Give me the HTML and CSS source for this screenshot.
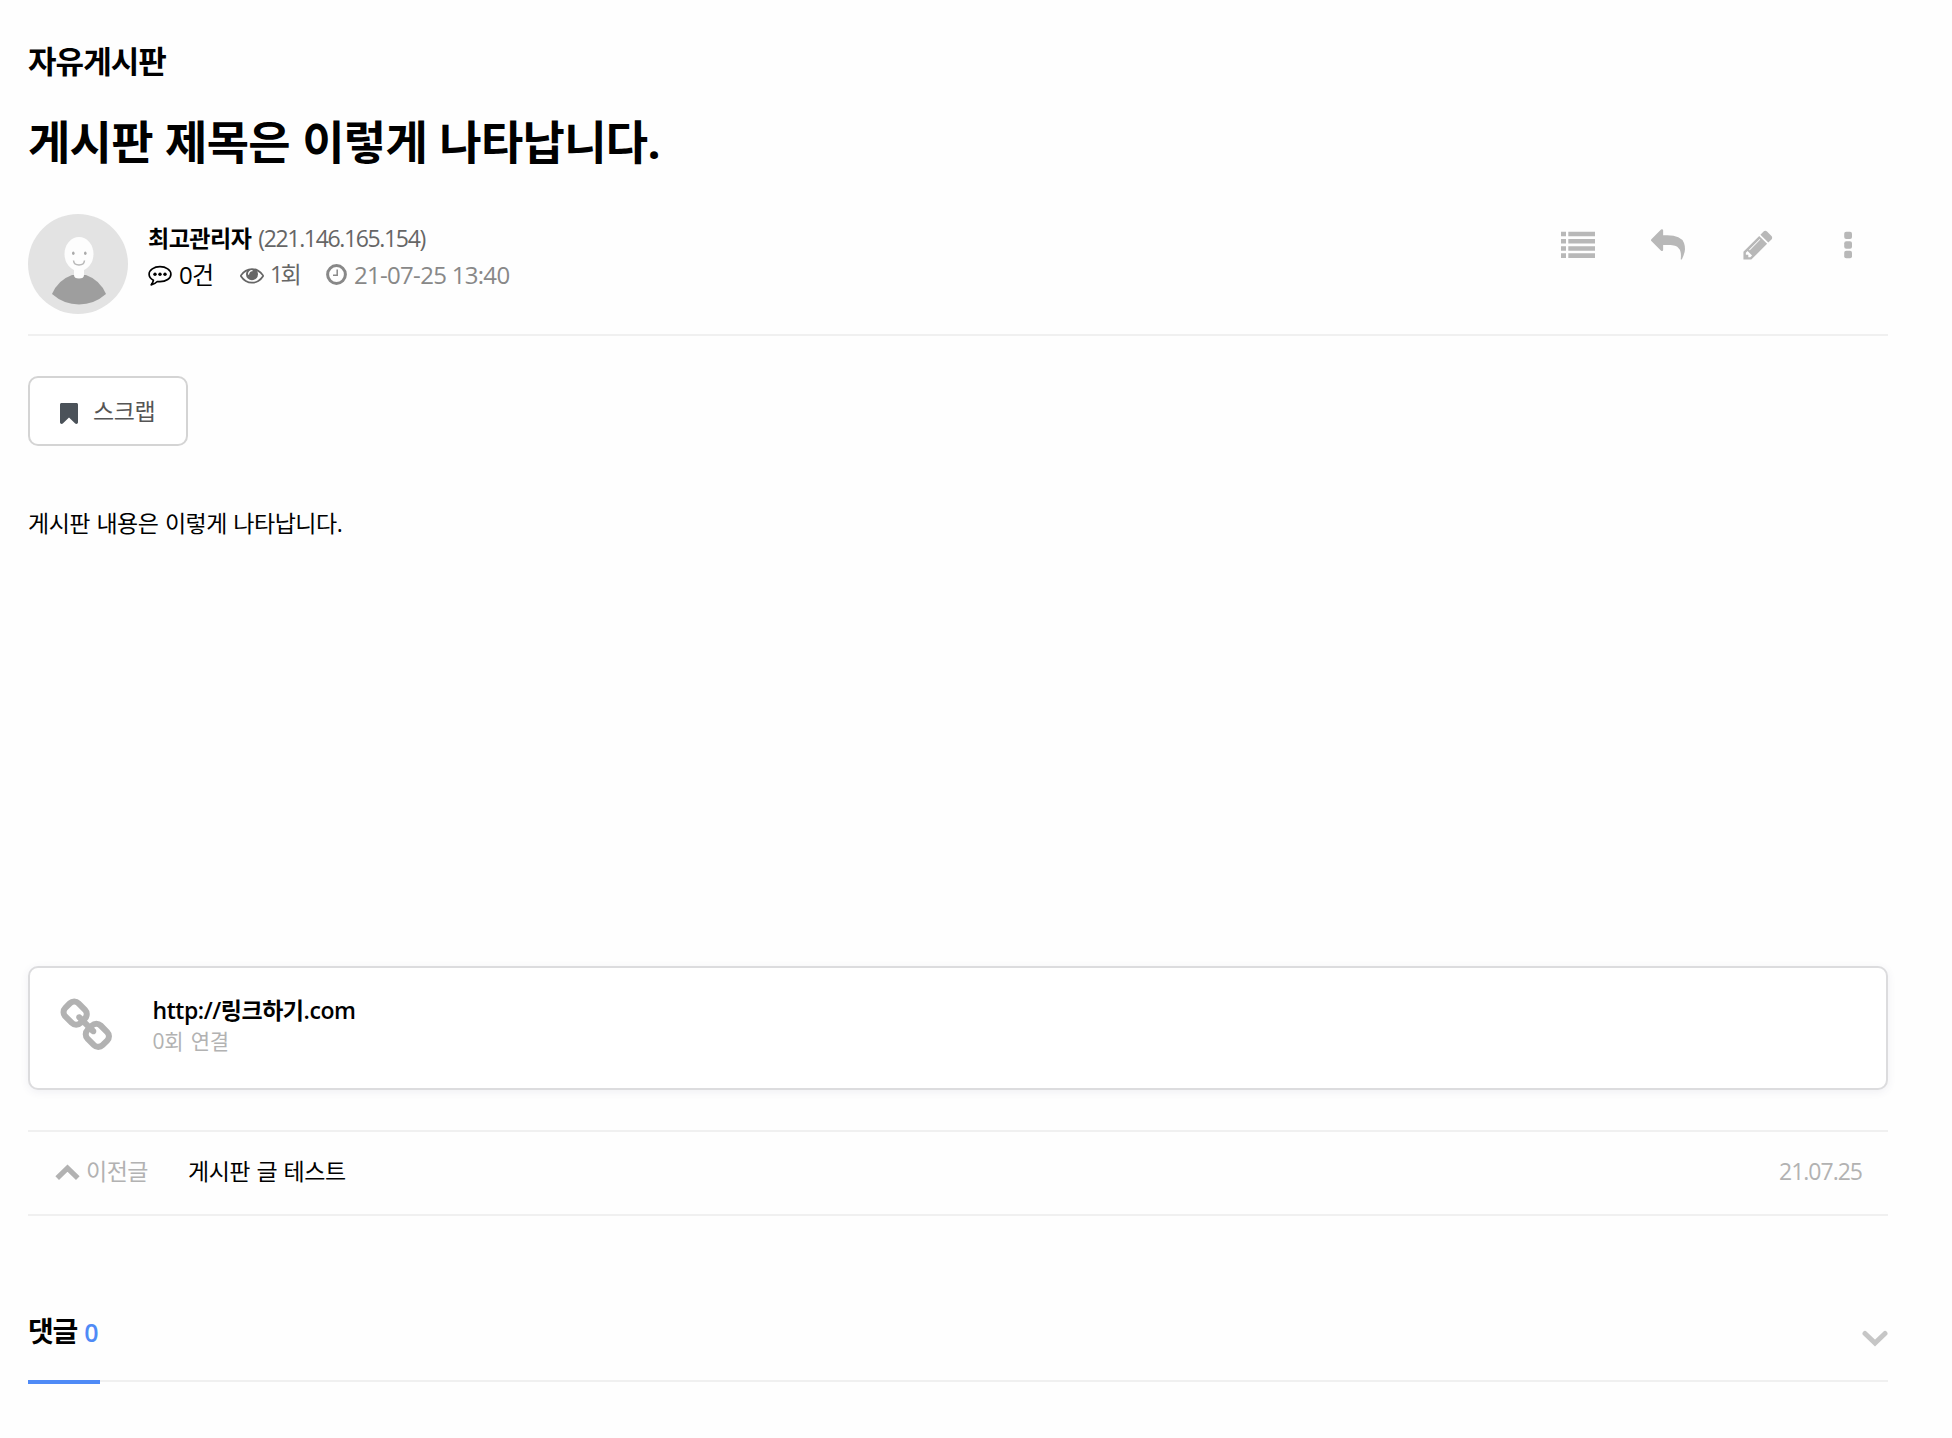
FILE: index.html
```html
<!DOCTYPE html>
<html lang="ko">
<head>
<meta charset="utf-8">
<title>자유게시판</title>
<link rel="stylesheet" href="styles.css">
</head>
<body>
<main class="board">
  <h2 class="board-name">자유게시판</h2>
  <h1 class="post-title">게시판 제목은 이렇게 나타납니다.</h1>

  <header class="post-info">
    <svg class="avatar" viewBox="0 0 100 100">
      <circle cx="50" cy="50" r="50" fill="#e3e3e3"/>
      <path d="M24 80Q30 66 44 61H58Q72 66 78 80Q66 90.500 51 90.500Q36 90.500 24 80Z" fill="#9e9e9e"/>
      <path d="M46 50H56V61Q56 64.500 51 64.500Q46 64.500 46 61Z" fill="#fdfdfd"/>
      <ellipse cx="51" cy="40" rx="14.500" ry="17" fill="#fdfdfd"/>
      <ellipse cx="45.300" cy="39.300" rx="1.300" ry="1.800" fill="#aaa"/>
      <ellipse cx="57.300" cy="39.300" rx="1.300" ry="1.800" fill="#aaa"/>
      <path d="M45.500 46.500Q46 51 51 51Q56 51 56.500 46.500" fill="none" stroke="#b8b8b8" stroke-width="1.500"/>
    </svg>
    <div class="profile">
      <p class="author"><strong>최고관리자</strong><span class="ip">(221.146.165.154)</span></p>
      <p class="meta">
        <span class="meta-item comments"><svg width="24" height="22" viewBox="0 0 24 22"><path d="M12 1.700C18 1.700 22.900 5 22.900 9.200S18 16.700 12 16.700Q10.500 16.700 9.300 16.500Q6.700 19.200 3.200 19.900Q5 18 5.400 15.200C2.600 13.700 1.100 11.600 1.100 9.200C1.100 5 6 1.700 12 1.700Z" fill="none" stroke="currentColor" stroke-width="1.700" stroke-linejoin="round"/><circle cx="7" cy="9.200" r="1.700"/><circle cx="12" cy="9.200" r="1.700"/><circle cx="17" cy="9.200" r="1.700"/></svg>0건</span>
        <span class="meta-item views"><svg width="24" height="24" viewBox="0 0 1792 1792"><path d="M1664 960q-152-236-381-353 61 104 61 225 0 185-131.500 316.500t-316.500 131.500-316.500-131.500-131.500-316.500q0-121 61-225-229 117-381 353 133 205 333.500 326.500t434.500 121.500 434.500-121.500 333.500-326.500zm-720-384q0-20-14-34t-34-14q-125 0-214.500 89.500t-89.500 214.500q0 20 14 34t34 14 34-14 14-34q0-86 61-147t147-61q20 0 34-14t14-34zm848 384q0 34-20 69-140 230-376.500 368.500t-499.500 138.500-499.500-139-376.500-368q-20-35-20-69t20-69q140-229 376.500-368t499.500-139 499.500 139 376.500 368q20 35 20 69z"/></svg>1회</span>
        <span class="meta-item date"><svg width="21" height="21" viewBox="0 0 21 21"><circle cx="10.500" cy="10.500" r="8.900" fill="none" stroke="currentColor" stroke-width="3"/><path d="M11.200 5.500V11.200H7" fill="none" stroke="currentColor" stroke-width="1.500"/></svg>21-07-25 13:40</span>
      </p>
    </div>
    <nav class="tools">
      <svg viewBox="0 0 34 34"><path d="M0 3.700h5v4.600H0zM0 11h5v4.600H0zM0 18.200h5v4.600H0zM0 25.300h5v4.700H0zM7.300 3.700H34v4.600H7.300zM7.300 11H34v4.600H7.300zM7.300 18.200H34v4.600H7.300zM7.300 25.300H34v4.700H7.300z"/></svg>
      <svg viewBox="0 0 1792 1792"><path d="M1792 1120q0 166-127 451-3 7-10.500 24t-13.500 30-13 22q-12 17-28 17-15 0-23.500-10t-8.500-25q0-9 2.500-26.500t2.500-23.500q5-68 5-123 0-101-17.500-181t-48.500-138.500-80-101-105.500-69.500-133-42.500-154-21.500-175.500-6h-224v256q0 26-19 45t-45 19-45-19l-512-512q-19-19-19-45t19-45l512-512q19-19 45-19t45 19 19 45v256h224q713 0 875 403 53 134 53 333z"/></svg>
      <svg viewBox="0 0 1792 1792"><path d="M491 1536l91-91-235-235-91 91v107h128v128h107zm523-928q0-22-22-22-10 0-17 7l-542 542q-7 7-7 17 0 22 22 22 10 0 17-7l542-542q7-7 7-17zm-54-192l416 416-832 832h-416v-416zm683 96q0 53-37 90l-166 166-416-416 166-165q36-38 90-38 53 0 91 38l235 234q37 39 37 91z"/></svg>
      <svg viewBox="0 0 34 34"><rect x="13.200" y="3.700" width="7.800" height="7.400" rx="2"/><rect x="13.200" y="13.300" width="7.800" height="7.400" rx="2"/><rect x="13.200" y="22.800" width="7.800" height="7.400" rx="2"/></svg>
    </nav>
  </header>

  <button class="scrap" type="button"><svg width="18" height="21" viewBox="256 128 1280 1520" preserveAspectRatio="none"><path d="M1420 128q23 0 44 9 33 13 52.500 41t19.500 62v1289q0 34-19.500 62t-52.500 41q-19 8-44 8-48 0-83-32l-441-424-441 424q-36 33-83 33-23 0-44-9-33-13-52.500-41t-19.500-62v-1289q0-34 19.500-62t52.500-41q21-9 44-9h1048z"/></svg>스크랩</button>

  <article class="content">게시판 내용은 이렇게 나타납니다.</article>

  <section class="link-card">
    <svg viewBox="0 0 1792 1792"><path d="M1520 1216q0-40-28-68l-208-208q-28-28-68-28-42 0-72 32 3 3 19 18.500t21.500 21.500 15 19 13 25.500 3.500 27.500q0 40-28 68t-68 28q-15 0-27.500-3.500t-25.500-13-19-15-21.500-21.500-18.500-19q-33 31-33 73 0 40 28 68l206 207q27 27 68 27 40 0 68-26l147-146q28-28 28-67zm-703-705q0-40-28-68l-206-207q-28-28-68-28-39 0-68 27l-147 146q-28 28-28 67 0 40 28 68l208 208q27 27 68 27 42 0 72-31-3-3-19-18.500t-21.500-21.500-15-19-13-25.500-3.500-27.500q0-40 28-68t68-28q15 0 27.500 3.500t25.500 13 19 15 21.500 21.500 18.500 19q33-31 33-73zm895 705q0 120-85 203l-147 146q-83 83-203 83-121 0-204-85l-206-207q-83-83-83-203 0-123 88-209l-88-88q-86 88-208 88-120 0-204-84l-208-208q-84-84-84-204t85-203l147-146q83-83 203-83 121 0 204 85l206 207q83 83 83 203 0 123-88 209l88 88q86-88 208-88 120 0 204 84l208 208q84 84 84 204z"/></svg>
    <div class="link-text">
      <a class="link-url">http://링크하기.com</a>
      <span class="link-count">0회 연결</span>
    </div>
  </section>

  <div class="prev-post">
    <svg width="25" height="18" viewBox="0 0 25 18"><path d="M2.200 14.200L12.500 4.200L22.800 14.200" fill="none" stroke="currentColor" stroke-width="5.200"/></svg>
    <span class="prev-label">이전글</span>
    <a class="prev-title">게시판 글 테스트</a>
    <time class="prev-date">21.07.25</time>
  </div>

  <section class="comments-head">
    <h2 class="comments-tab">댓글<span class="comments-count">0</span></h2>
    <svg width="26" height="18" viewBox="0 0 26 18"><path d="M3 3.500L13 13L23 3.500" fill="none" stroke="currentColor" stroke-width="5" stroke-linecap="round"/></svg>
  </section>
  <div class="comments-line"><div class="line-active"></div><div class="line-rest"></div></div>
</main>
</body>
</html>
```
FILE: styles.css
```css
* { box-sizing: border-box; }

body {
  margin: 0;
  background: #fefefe;
  color: #000;
  font: 23px/30px "Open Sans", "Noto Sans CJK KR", sans-serif;
  letter-spacing: -0.5px;
}

h1, h2, p { margin: 0; }
svg { display: block; flex: none; fill: currentColor; }

.board {
  display: flex;
  flex-direction: column;
  width: 1860px;
  margin-left: 28px;
  padding-top: 41px;
}

.board-name { font-size: 31px; line-height: 41px; letter-spacing: -0.95px; }
.post-title { margin-top: 29px; font-size: 46px; line-height: 60px; letter-spacing: -0.7px; word-spacing: 1px; }

.post-info {
  display: flex;
  align-items: flex-start;
  height: 122px;
  margin-top: 43px;
  margin-bottom: 40px;
  border-bottom: 2px solid #f0f0f0;
}
.avatar { width: 100px; height: 100px; }
.profile { margin-left: 20px; padding-top: 6px; }
.author { display: flex; gap: 7px; line-height: 36px; }
.ip { color: #666; letter-spacing: -1.35px; }
.meta { display: flex; line-height: 37px; }
.meta-item { display: flex; align-items: center; }
.comments { width: 92px; font-size: 24px; letter-spacing: -0.7px; }
.comments svg { margin: 3px 7px 0 0; }
.views { width: 86px; color: #666; letter-spacing: -2.6px; }
.views svg { margin-right: 6px; }
.date { color: #888; font-size: 24px; letter-spacing: -0.7px; }
.date svg { margin-right: 7px; }

.tools { display: flex; gap: 56px; margin: 14px 23px 0 auto; color: #b8b8b8; }
.tools svg { width: 34px; height: 34px; }

.scrap {
  display: flex;
  align-items: center;
  width: 160px;
  height: 70px;
  padding: 0 0 0 30px;
  border: 2px solid #d4d4d4;
  border-radius: 10px;
  background: #fff;
  color: #555;
  font: inherit;
  letter-spacing: -0.4px;
}
.scrap svg { margin: 4px 15px 0 0; color: #4b5259; }

.content { height: 458px; margin-top: 62px; word-spacing: 1px; }

.link-card {
  display: flex;
  height: 124px;
  padding: 27px 28px;
  border: 2px solid #dcdcde;
  border-radius: 10px;
  background: #fff;
  box-shadow: 0 2px 8px rgba(60, 60, 120, 0.08);
}
.link-card svg { width: 56.500px; height: 56.500px; margin-top: 3px; color: #b2b2b2; }
.link-text { display: flex; flex-direction: column; margin-left: 38px; }
.link-url { font-weight: 600; letter-spacing: -0.45px; }
.link-count { line-height: 32px; font-size: 21px; letter-spacing: -0.2px; word-spacing: 2px; color: #b2b2b2; }

.prev-post {
  display: flex;
  align-items: center;
  height: 86px;
  margin-top: 40px;
  padding: 0 26px 4px 27px;
  border: solid #f0f0f0;
  border-width: 2px 0;
}
.prev-post svg, .prev-label, .prev-date { color: #b2b2b2; }
.prev-post svg { margin-top: 4px; }
.prev-label { margin-left: 6px; }
.prev-title { margin-left: 40px; word-spacing: 1px; }
.prev-date { margin-left: auto; letter-spacing: -1px; }

.comments-head {
  display: flex;
  justify-content: space-between;
  align-items: flex-start;
  height: 70px;
  margin-top: 94px;
}
.comments-tab {
  display: flex;
  align-items: baseline;
  font-size: 28px;
  line-height: 42px;
  letter-spacing: -1.2px;
}
.comments-count { margin-left: 7px; font-size: 25px; font-weight: 600; color: #4f8af6; }
.comments-head svg { margin-top: 20px; color: #c6c6c6; }
.comments-line { display: flex; height: 4px; }
.line-active { width: 72px; height: 4px; background: #4f8af6; }
.line-rest { flex: 1; height: 2px; background: #f0f0f0; }
```
